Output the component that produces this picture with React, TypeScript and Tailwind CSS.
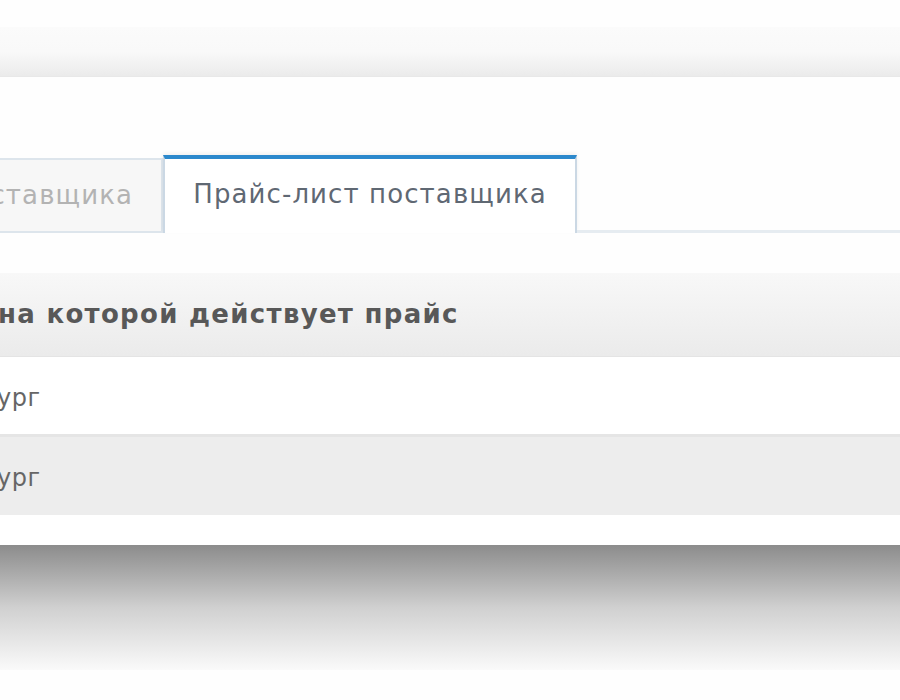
import React from "react";

const font = { fontFamily: '"DejaVu Sans", Verdana, sans-serif' };

function Clipped({ hidden, shown, className }: { hidden: string; shown: string; className?: string }) {
  // The leading part overflows to the left of the page edge, the rest follows in flow.
  return (
    <div className={"flex items-center whitespace-nowrap " + (className ?? "")}>
      <span className="flex w-0 justify-end">
        <span className="whitespace-nowrap">{hidden}</span>
      </span>
      <span>{shown}</span>
    </div>
  );
}

export default function App() {
  return (
    <div className="relative h-[700px] w-[900px] overflow-hidden bg-[#fefefe]" style={font}>
      {/* toolbar strip */}
      <div className="h-[27px]" />
      <div className="h-[50px] bg-gradient-to-b from-[#fbfbfb] via-[#f9f9f9] to-[#ebebeb] border-b border-[#e8e8e8]" />

      <div className="h-[78px]" />

      {/* tabs */}
      <div className="flex h-[78px] items-stretch">
        <div className="mt-[3px] flex w-[163px] shrink-0 items-center justify-end border-y-2 border-r-2 border-[#dde5ec] bg-[#f7f7f7] pr-[28px] text-[26px] tracking-[1.1px] text-[#b3b3b3]">
          <span className="whitespace-nowrap">Карточка поставщика</span>
        </div>
        <div className="flex w-[414px] shrink-0 items-center justify-center border-x-2 border-t-4 border-x-[#cbd8e4] border-t-[#2b88cc] bg-white pb-[3px] text-[26px] tracking-[1.1px] text-[#5f6873] shadow-[0_-2px_4px_rgba(0,0,0,0.06)]">
          <span className="whitespace-nowrap">Прайс-лист поставщика</span>
        </div>
        <div className="flex-1 border-b-[3px] border-[#e6ecf1]" />
      </div>

      <div className="h-[40px]" />

      {/* table */}
      <div className="flex h-[84px] items-center bg-gradient-to-b from-[#f8f8f8] to-[#ebebeb] border-b border-[#e4e4e4]">
        <Clipped
          hidden="Территория, "
          shown="на которой действует прайс"
          className="-ml-[2px] text-[26px] font-bold tracking-[1.3px] text-[#585858]"
        />
      </div>
      <div className="flex h-[80px] items-center bg-white border-b-[3px] border-[#e5e5e5]">
        <Clipped hidden="Санкт-Петерб" shown="ург" className="-ml-[3px] pt-[4px] text-[24px] tracking-[0.5px] text-[#666]" />
      </div>
      <div className="flex h-[78px] items-center bg-[#ededed]">
        <Clipped hidden="Екатеринб" shown="ург" className="-ml-[3px] pt-[4px] text-[24px] tracking-[0.5px] text-[#666]" />
      </div>

      <div className="h-[30px] bg-white" />

      {/* drop shadow below the panel */}
      <div className="h-[125px] bg-gradient-to-b from-[#8c8c8c] via-[#d0d0d0] via-50% to-[#fafafa]" />
    </div>
  );
}
